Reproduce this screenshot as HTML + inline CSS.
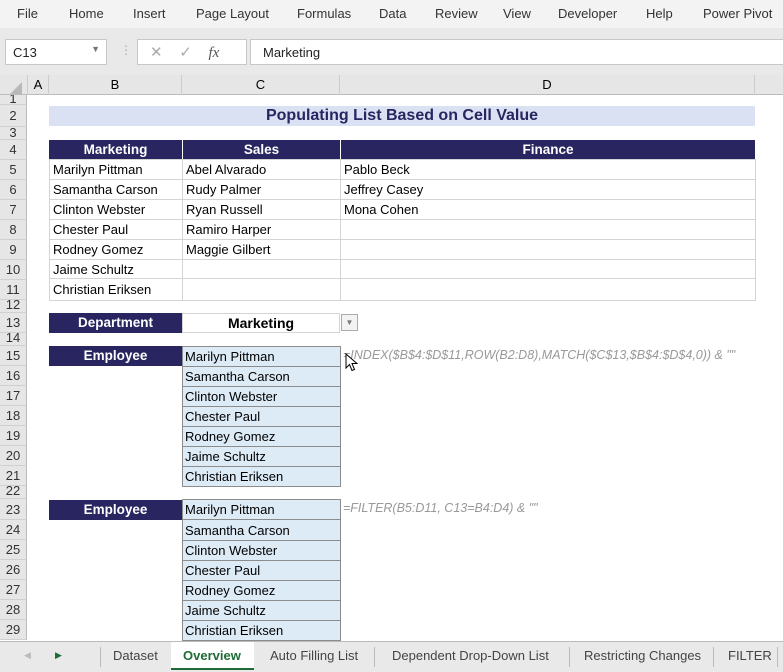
<!DOCTYPE html><html><head><style>
*{margin:0;padding:0;box-sizing:border-box}
body{width:783px;height:672px;overflow:hidden;background:#fff;font-family:"Liberation Sans",sans-serif;position:relative}
.a{position:absolute;white-space:nowrap}
.menu span{position:absolute;top:6px;font-size:13px;color:#333}
.rh{position:absolute;left:0;width:27px;background:#e6e6e6;border-bottom:1px solid #d0d0d0;font-size:13px;color:#333;text-align:center;border-right:1px solid #bbb;overflow:hidden}
.c{position:absolute;font-size:13px;color:#000;padding-left:3px;line-height:20px;border:1px solid #d4d4d4;overflow:hidden}
.hd{position:absolute;background:#282560;color:#fff;font-weight:bold;font-size:13.5px;text-align:center;line-height:20px}
.l{position:absolute;left:182px;width:159px;height:21px;background:#ddebf7;border:1px solid #8c8c8c;font-size:13px;line-height:19px;padding-left:2px}
.tab{position:absolute;top:648px;font-size:13px;color:#444}
</style></head><body>
<div class="a" style="left:0;top:0;width:783px;height:28px;background:#f3f3f3"></div>
<div class="menu">
<span style="left:17px">File</span><span style="left:69px">Home</span><span style="left:133px">Insert</span><span style="left:196px">Page Layout</span><span style="left:297px">Formulas</span><span style="left:379px">Data</span><span style="left:435px">Review</span><span style="left:503px">View</span><span style="left:558px">Developer</span><span style="left:646px">Help</span><span style="left:703px">Power Pivot</span>
</div>
<div class="a" style="left:0;top:28px;width:783px;height:47px;background:#e9e9e9"></div>
<div class="a" style="left:5px;top:39px;width:102px;height:26px;background:#fff;border:1px solid #c8c8c8;font-size:13px;padding:5px 7px;color:#222">C13<span style="position:absolute;right:6px;top:4px;font-size:9px;color:#777">▼</span></div>
<div class="a" style="left:120px;top:43px;color:#aaa;font-size:12px">⋮</div>
<div class="a" style="left:137px;top:39px;width:110px;height:26px;background:#fff;border:1px solid #c8c8c8;font-size:15px;color:#aaa;padding:3px 12px">✕&nbsp;&nbsp;&nbsp;&nbsp;✓&nbsp;&nbsp;&nbsp;&nbsp;<i style="color:#555;font-family:'Liberation Serif'">fx</i></div>
<div class="a" style="left:250px;top:39px;width:540px;height:26px;background:#fff;border:1px solid #c8c8c8;font-size:13px;padding:5px 12px;color:#222">Marketing</div>
<div class="a" style="left:0;top:75px;width:783px;height:20px;background:#e6e6e6;border-bottom:1px solid #bbb"></div>
<div class="a" style="left:10px;top:82px;width:0;height:0;border-left:12px solid transparent;border-bottom:12px solid #b8b8b8"></div>
<div class="a" style="left:27px;top:75px;width:22px;height:20px;border-left:1px solid #ccc;border-right:1px solid #ccc;font-size:13px;text-align:center;line-height:20px">A</div>
<div class="a" style="left:49px;top:75px;width:133px;height:20px;border-right:1px solid #ccc;font-size:13px;text-align:center;line-height:20px">B</div>
<div class="a" style="left:182px;top:75px;width:158px;height:20px;border-right:1px solid #ccc;font-size:13px;text-align:center;line-height:20px">C</div>
<div class="a" style="left:340px;top:75px;width:415px;height:20px;border-right:1px solid #ccc;font-size:13px;text-align:center;line-height:20px">D</div>

<div class="rh" style="top:95px;height:10px;line-height:8px">1</div>
<div class="rh" style="top:105px;height:22px;line-height:22px">2</div>
<div class="rh" style="top:127px;height:13px;line-height:12px">3</div>
<div class="rh" style="top:140px;height:20px;line-height:20px">4</div>
<div class="rh" style="top:160px;height:20px;line-height:20px">5</div>
<div class="rh" style="top:180px;height:20px;line-height:20px">6</div>
<div class="rh" style="top:200px;height:20px;line-height:20px">7</div>
<div class="rh" style="top:220px;height:20px;line-height:20px">8</div>
<div class="rh" style="top:240px;height:20px;line-height:20px">9</div>
<div class="rh" style="top:260px;height:20px;line-height:20px">10</div>
<div class="rh" style="top:280px;height:20px;line-height:20px">11</div>
<div class="rh" style="top:300px;height:13px;line-height:9px">12</div>
<div class="rh" style="top:313px;height:20px;line-height:20px">13</div>
<div class="rh" style="top:333px;height:13px;line-height:9px">14</div>
<div class="rh" style="top:346px;height:20px;line-height:20px">15</div>
<div class="rh" style="top:366px;height:20px;line-height:20px">16</div>
<div class="rh" style="top:386px;height:20px;line-height:20px">17</div>
<div class="rh" style="top:406px;height:20px;line-height:20px">18</div>
<div class="rh" style="top:426px;height:20px;line-height:20px">19</div>
<div class="rh" style="top:446px;height:20px;line-height:20px">20</div>
<div class="rh" style="top:466px;height:20px;line-height:20px">21</div>
<div class="rh" style="top:486px;height:13px;line-height:9px">22</div>
<div class="rh" style="top:499px;height:21px;line-height:21px">23</div>
<div class="rh" style="top:520px;height:20px;line-height:20px">24</div>
<div class="rh" style="top:540px;height:20px;line-height:20px">25</div>
<div class="rh" style="top:560px;height:20px;line-height:20px">26</div>
<div class="rh" style="top:580px;height:20px;line-height:20px">27</div>
<div class="rh" style="top:600px;height:20px;line-height:20px">28</div>
<div class="rh" style="top:620px;height:20px;line-height:20px">29</div>

<div class="a" style="left:49px;top:106px;width:706px;height:20px;background:#d9e1f2;color:#282560;font-weight:bold;font-size:16px;text-align:center;line-height:20px">Populating List Based on Cell Value</div>

<div class="hd" style="left:49px;top:140px;width:133px">Marketing</div>
<div class="hd" style="left:182px;top:140px;width:158px;border-left:1px solid #fff">Sales</div>
<div class="hd" style="left:340px;top:140px;width:415px;border-left:1px solid #fff">Finance</div>

<div class="c" style="left:49px;top:159px;width:134px;height:142px;border-width:1px;line-height:20px">Marilyn Pittman<br>Samantha Carson<br>Clinton Webster<br>Chester Paul<br>Rodney Gomez<br>Jaime Schultz<br>Christian Eriksen</div>
<div class="c" style="left:182px;top:159px;width:159px;height:142px">Abel Alvarado<br>Rudy Palmer<br>Ryan Russell<br>Ramiro Harper<br>Maggie Gilbert</div>
<div class="c" style="left:340px;top:159px;width:416px;height:142px">Pablo Beck<br>Jeffrey Casey<br>Mona Cohen</div>
<div class="a" style="left:49px;top:179px;width:707px;height:100px;border-top:1px solid #d4d4d4;border-bottom:1px solid #d4d4d4"></div>
<div class="a" style="left:49px;top:199px;width:707px;height:61px;border-top:1px solid #d4d4d4;border-bottom:1px solid #d4d4d4"></div>
<div class="a" style="left:49px;top:219px;width:707px;height:21px;border-top:1px solid #d4d4d4;border-bottom:1px solid #d4d4d4"></div>

<div class="hd" style="left:49px;top:313px;width:133px">Department</div>
<div class="a" style="left:182px;top:313px;width:158px;height:20px;border:1px solid #d4d4d4;font-weight:bold;font-size:14px;text-align:center;line-height:19px">Marketing</div>
<div class="a" style="left:341px;top:314px;width:17px;height:17px;border:1px solid #aaa;background:#f3f3f3;font-size:8px;color:#777;text-align:center;line-height:16px">▼</div>

<div class="hd" style="left:49px;top:346px;width:133px">Employee</div>
<div class="l" style="top:346px">Marilyn Pittman</div>
<div class="l" style="top:366px">Samantha Carson</div>
<div class="l" style="top:386px">Clinton Webster</div>
<div class="l" style="top:406px">Chester Paul</div>
<div class="l" style="top:426px">Rodney Gomez</div>
<div class="l" style="top:446px">Jaime Schultz</div>
<div class="l" style="top:466px">Christian Eriksen</div>
<div class="a" style="left:343px;top:348px;font-size:12.5px;font-style:italic;color:#999">=INDEX($B$4:$D$11,ROW(B2:D8),MATCH($C$13,$B$4:$D$4,0)) &amp; ""</div>
<svg class="a" style="left:345px;top:353px" width="14" height="20"><path d="M1 1 L1 15 L4.5 11.5 L7 17.5 L9.5 16.5 L7 10.5 L12 10.5 Z" fill="#fff" stroke="#000" stroke-width="1"/></svg>

<div class="hd" style="left:49px;top:500px;width:133px">Employee</div>
<div class="l" style="top:499px">Marilyn Pittman</div>
<div class="l" style="top:519px;height:22px;line-height:21px">Samantha Carson</div>
<div class="l" style="top:540px">Clinton Webster</div>
<div class="l" style="top:560px">Chester Paul</div>
<div class="l" style="top:580px">Rodney Gomez</div>
<div class="l" style="top:600px">Jaime Schultz</div>
<div class="l" style="top:620px">Christian Eriksen</div>
<div class="a" style="left:343px;top:501px;font-size:12.5px;font-style:italic;color:#999">=FILTER(B5:D11, C13=B4:D4) &amp; ""</div>

<div class="a" style="left:0;top:641px;width:783px;height:31px;background:#e9e9e9;border-top:1px solid #bbb"></div>
<div class="a" style="left:24px;top:650px;font-size:9px;color:#bbb">◀</div>
<div class="a" style="left:55px;top:650px;font-size:9px;color:#1e6b38">▶</div>
<div class="a" style="left:100px;top:647px;width:1px;height:20px;background:#bbb"></div>
<div class="tab" style="left:113px">Dataset</div>
<div class="a" style="left:171px;top:642px;width:83px;height:28px;background:#fff;border-bottom:2px solid #1e6b38"></div>
<div class="tab" style="left:183px;color:#1e6b38;font-weight:bold">Overview</div>
<div class="tab" style="left:270px">Auto Filling List</div>
<div class="a" style="left:374px;top:647px;width:1px;height:20px;background:#bbb"></div>
<div class="tab" style="left:392px">Dependent Drop-Down List</div>
<div class="a" style="left:569px;top:647px;width:1px;height:20px;background:#bbb"></div>
<div class="tab" style="left:584px">Restricting Changes</div>
<div class="a" style="left:713px;top:647px;width:1px;height:20px;background:#bbb"></div>
<div class="tab" style="left:728px">FILTER</div>
<div class="a" style="left:777px;top:647px;width:1px;height:20px;background:#bbb"></div>
</body></html>
